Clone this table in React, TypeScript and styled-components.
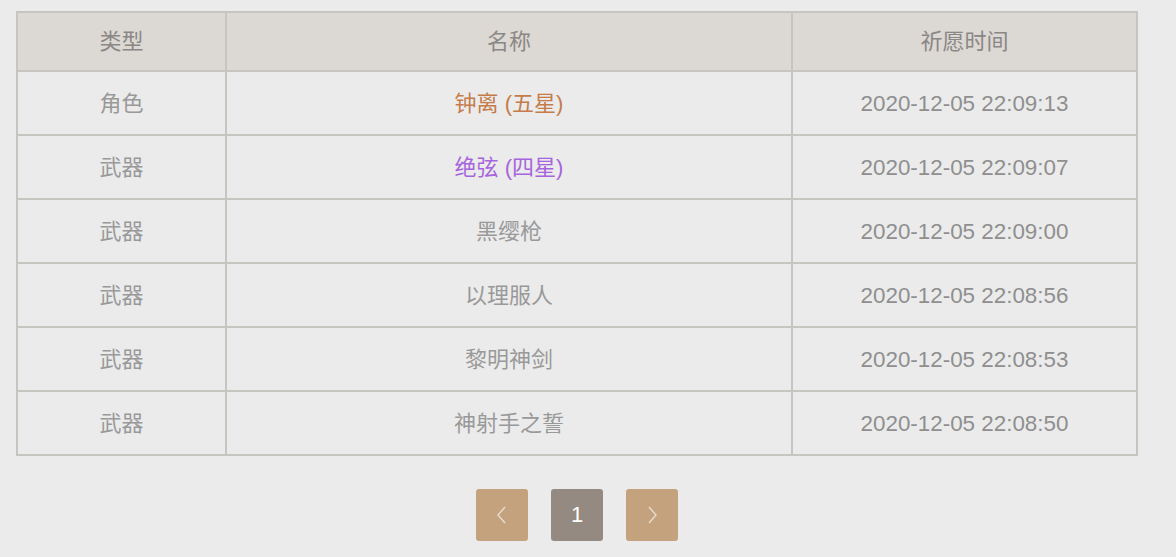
import React from "react";
import styled, { createGlobalStyle } from "styled-components";

const Global = createGlobalStyle`
  html, body { margin: 0; padding: 0; background: #ebebeb; }
  body { font-family: "Liberation Sans", "Noto Sans CJK SC", sans-serif; }
`;

const Page = styled.div`
  width: 1176px;
  height: 557px;
  box-sizing: border-box;
  padding: 11px 38px 0 16px;
  background: #ebebeb;
  overflow: hidden;
`;

const Table = styled.table`
  width: 1122px;
  border-collapse: collapse;
  table-layout: fixed;
  border: 2px solid #c6c5c0;
`;

const HeadCell = styled.th`
  height: 56px;
  padding: 1px 0 0;
  background: #dcd8d3;
  border: 2px solid #c6c5c0;
  color: #8a8786;
  font-weight: normal;
  font-size: 22px;
  line-height: 30px;
  text-align: center;
  font-family: "Liberation Sans", "Noto Sans CJK SC", sans-serif;
`;

const Cell = styled.td<{ $tone?: "gold" | "purple" | "plain"; $time?: boolean }>`
  height: 61px;
  padding: 1px 0 0;
  background: #ebebeb;
  border: 2px solid #c6c5c0;
  text-align: center;
  font-size: ${(p) => (p.$time ? "22.4px" : "22px")};
  line-height: 30px;
  font-family: "Liberation Sans", "Noto Sans CJK SC", sans-serif;
  color: ${(p) =>
    p.$tone === "gold"
      ? "#c57c4a"
      : p.$tone === "purple"
      ? "#a765dd"
      : p.$time
      ? "#8f8f8f"
      : "#999999"};
`;

const Pager = styled.div`
  display: flex;
  justify-content: center;
  gap: 23px;
  margin-top: 33px;
`;

const PageBtn = styled.div<{ $active?: boolean }>`
  width: 52px;
  height: 52px;
  border-radius: 3px;
  background: ${(p) => (p.$active ? "#948a82" : "#c4a27e")};
  color: #ffffff;
  display: flex;
  align-items: center;
  justify-content: center;
  font-size: 22px;
  font-family: "Liberation Sans", sans-serif;
`;

const Chevron = ({ dir }: { dir: "left" | "right" }) => (
  <svg width="14" height="20" viewBox="0 0 14 20" fill="none">
    <path
      d={dir === "left" ? "M10 2 L3 10 L10 18" : "M4 2 L11 10 L4 18"}
      stroke="#e8ddd0"
      strokeWidth="1.4"
    />
  </svg>
);

type Row = { type: string; name: string; tone: "gold" | "purple" | "plain"; time: string };

const rows: Row[] = [
  { type: "角色", name: "钟离 (五星)", tone: "gold", time: "2020-12-05 22:09:13" },
  { type: "武器", name: "绝弦 (四星)", tone: "purple", time: "2020-12-05 22:09:07" },
  { type: "武器", name: "黑缨枪", tone: "plain", time: "2020-12-05 22:09:00" },
  { type: "武器", name: "以理服人", tone: "plain", time: "2020-12-05 22:08:56" },
  { type: "武器", name: "黎明神剑", tone: "plain", time: "2020-12-05 22:08:53" },
  { type: "武器", name: "神射手之誓", tone: "plain", time: "2020-12-05 22:08:50" },
];

export default function App() {
  return (
    <Page>
      <Global />
      <Table>
        <colgroup>
          <col style={{ width: 209 }} />
          <col style={{ width: 566 }} />
          <col />
        </colgroup>
        <thead>
          <tr>
            <HeadCell>类型</HeadCell>
            <HeadCell>名称</HeadCell>
            <HeadCell>祈愿时间</HeadCell>
          </tr>
        </thead>
        <tbody>
          {rows.map((r, i) => (
            <tr key={i}>
              <Cell>{r.type}</Cell>
              <Cell $tone={r.tone}>{r.name}</Cell>
              <Cell $time>{r.time}</Cell>
            </tr>
          ))}
        </tbody>
      </Table>
      <Pager>
        <PageBtn>
          <Chevron dir="left" />
        </PageBtn>
        <PageBtn $active>1</PageBtn>
        <PageBtn>
          <Chevron dir="right" />
        </PageBtn>
      </Pager>
    </Page>
  );
}
